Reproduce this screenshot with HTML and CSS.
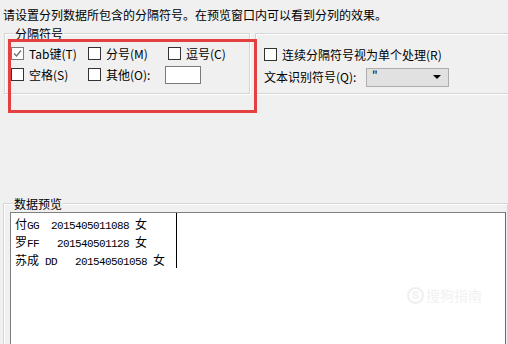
FILE: index.html
```html
<!DOCTYPE html>
<html lang="zh-CN">
<head>
<meta charset="utf-8">
<title>文本分列向导</title>
<link rel="stylesheet" href="styles.css">
</head>
<body>
<div class="dialog">
  <p class="intro">请设置分列数据所包含的分隔符号。在预览窗口内可以看到分列的效果。</p>
  <div class="options">
    <div class="group sep">
      <div class="group-label">分隔符号</div>
      <div class="grid">
        <label class="item"><span class="box checked"><svg viewBox="0 0 11 11" width="11" height="11"><path d="M2 5.5 L4.5 8 L9 2.5" fill="none" stroke="#707070" stroke-width="1.3"/></svg></span>Tab键(T)</label>
        <label class="item"><span class="box"></span>分号(M)</label>
        <label class="item"><span class="box"></span>逗号(C)</label>
        <label class="item"><span class="box"></span>空格(S)</label>
        <label class="item"><span class="box"></span>其他(O):</label>
        <span class="item"><span class="textbox"></span></span>
      </div>
    </div>
    <div class="group other">
      <label class="item"><span class="box"></span>连续分隔符号视为单个处理(R)</label>
      <div class="item">
        <span class="qlabel">文本识别符号(Q):</span>
        <span class="select"><span class="sel-val">"</span><span class="caret"></span></span>
      </div>
    </div>
  </div>
  <div class="group preview">
    <div class="group-label">数据预览</div>
    <div class="preview-box">
      <div class="col">
        <div class="row"><span class="cjk">付</span>GG  2015405011088 <span class="cjk">女</span></div>
        <div class="row"><span class="cjk">罗</span>FF   201540501128 <span class="cjk">女</span></div>
        <div class="row"><span class="cjk">苏成</span> DD   201540501058 <span class="cjk">女</span></div>
      </div>
    </div>
  </div>
  <div class="annot"></div>
  <div class="watermark"><span class="wm-logo">S</span><span class="wm-text">搜狗指南</span></div>
</div>
</body>
</html>
```
FILE: styles.css
```css
html, body {
  margin: 0;
  padding: 0;
  background: #f0f0f0;
  overflow: hidden;
}
.dialog {
  position: relative;
  width: 508px;
  height: 344px;
  overflow: hidden;
  font-family: "Noto Sans CJK SC", "Liberation Sans", sans-serif;
  font-size: 12px;
  color: #000;
}
.intro {
  margin: 0;
  height: 33px;
  box-sizing: border-box;
  padding: 7px 0 0 3px;
  line-height: 16px;
  white-space: nowrap;
}
.group {
  border: 1px solid #d5d5d5;
  box-shadow: inset 1px 1px 0 #fff, 1px 1px 0 #fff;
  box-sizing: border-box;
  flex: none;
}
.group-label {
  display: block;
  width: fit-content;
  margin: -7px 0 0 9px;
  padding: 0 1px;
  line-height: 13px;
  background: #f0f0f0;
}
.options {
  display: flex;
  gap: 5px;
  margin-left: 4px;
}
.sep {
  width: 246px;
  height: 61px;
}
.grid {
  display: grid;
  grid-template-columns: 77px 77px auto;
  grid-template-rows: 17px 19px;
  row-gap: 3px;
  margin-top: 5px;
  padding-left: 6px;
}
.item {
  display: flex;
  align-items: center;
  white-space: nowrap;
  line-height: 16px;
}
.grid .item:nth-child(3) {
  margin-left: 3px;
}
.box {
  width: 13px;
  height: 13px;
  box-sizing: border-box;
  border: 1px solid #333;
  background: #fff;
  margin-right: 5px;
  flex: none;
  display: flex;
  align-items: center;
  justify-content: center;
}
.box.checked {
  border-color: #7a7a7a;
}
.box svg {
  display: block;
}
.textbox {
  width: 36px;
  height: 18px;
  box-sizing: border-box;
  border: 1px solid #7a7a7a;
  background: #fff;
}
.other {
  width: 265px;
  height: 61px;
  display: flex;
  flex-direction: column;
  gap: 4px;
  padding: 12px 0 0 8px;
}
.other .item:first-child {
  height: 17px;
}
.other .item + .item {
  height: 20px;
}
.qlabel {
  width: 102px;
  flex: none;
}
.select {
  width: 83px;
  height: 19px;
  flex: none;
  box-sizing: border-box;
  border: 1px solid #adadad;
  background: #e1e1e1;
  display: flex;
  align-items: flex-start;
  justify-content: space-between;
  padding: 0 7px 0 5px;
}
.sel-val {
  line-height: 13px;
}
.caret {
  width: 0;
  height: 0;
  margin-top: 6px;
  border-left: 4px solid transparent;
  border-right: 4px solid transparent;
  border-top: 4px solid #000;
}
.preview {
  width: 505px;
  height: 160px;
  margin: 109px 0 0 3px;
  border-right-color: #d5d5d5;
  border-bottom: none;
}
.preview-box {
  margin: 2px 1px 0 6px;
  height: 140px;
  background: #fff;
  border: 1px solid #7f7f7f;
  border-right-color: #6a6a6a;
  padding-left: 4px;
}
.col {
  width: 162px;
  height: 55px;
  padding-top: 2px;
  border-right: 1px solid #000;
  box-sizing: border-box;
  font-family: "Liberation Mono", monospace;
  font-size: 11px;
  letter-spacing: -0.6px;
}
.row {
  height: 18px;
  line-height: 18px;
  white-space: pre;
}
.cjk {
  font-family: "Noto Sans CJK SC", sans-serif;
  font-size: 12px;
  letter-spacing: 0;
}
.annot {
  position: absolute;
  left: 8px;
  top: 39px;
  width: 249px;
  height: 74px;
  box-sizing: border-box;
  border: 3px solid #e4403f;
}
.watermark {
  position: absolute;
  left: 407px;
  top: 286px;
  display: flex;
  align-items: center;
  gap: 2px;
  color: #f1f1f1;
}
.wm-logo {
  width: 17px;
  height: 17px;
  border-radius: 50%;
  border: 2px solid #efefef;
  box-sizing: border-box;
  font: bold 11px/13px "Liberation Sans", sans-serif;
  text-align: center;
}
.wm-text {
  font-size: 14px;
  line-height: 18px;
}
```
